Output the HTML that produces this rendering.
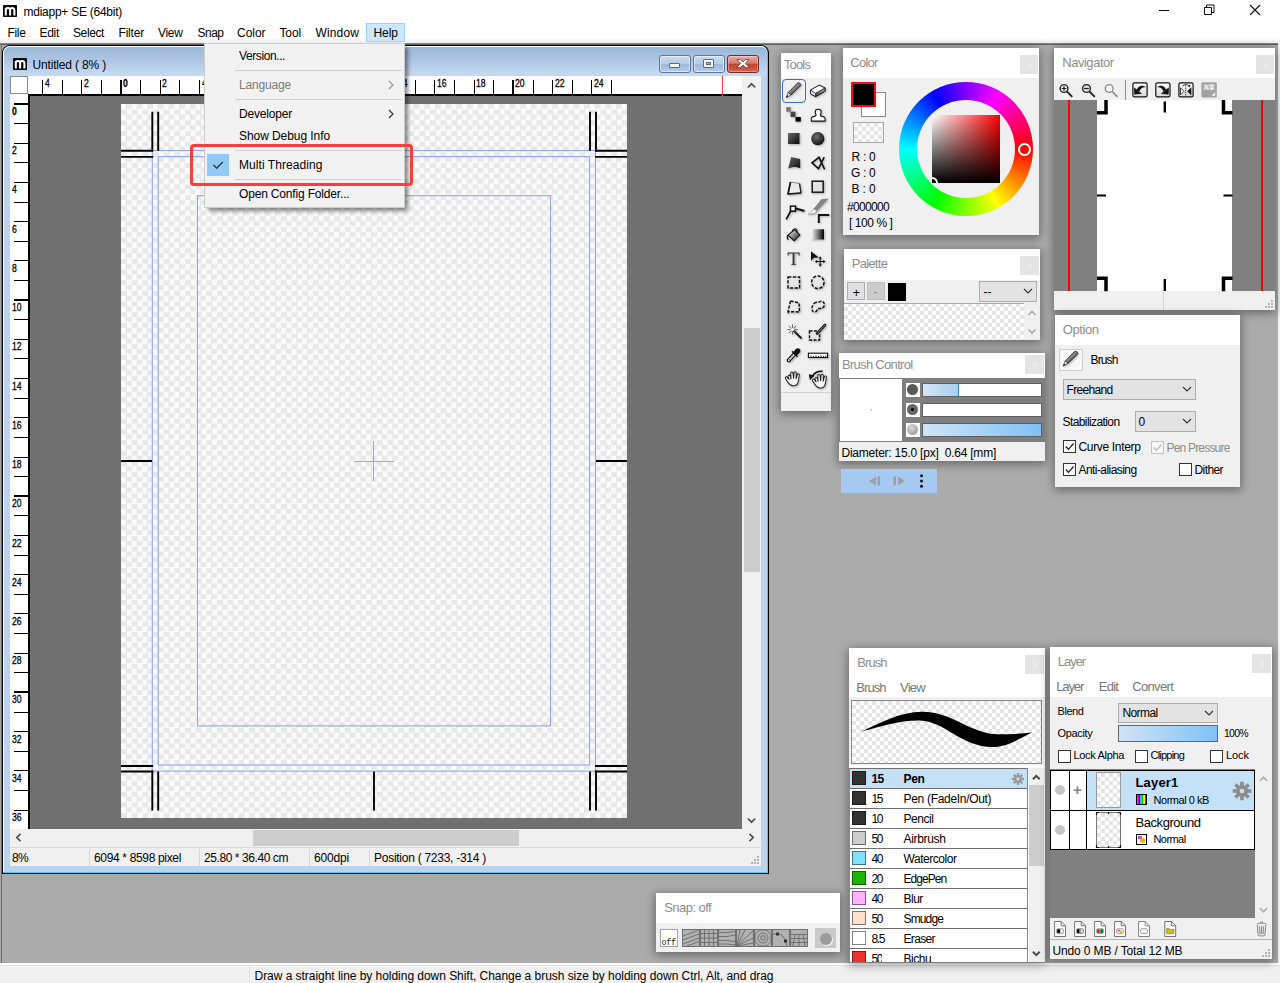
<!DOCTYPE html>
<html lang="en">
<head>
<meta charset="utf-8">
<title>mdiapp+ SE (64bit)</title>
<style>
*{box-sizing:border-box;margin:0;padding:0}
html,body{width:1280px;height:983px;overflow:hidden;background:#ababab;font-family:"Liberation Sans","DejaVu Sans",sans-serif;font-size:12px;color:#000}
.a{position:absolute}
.t{position:absolute;white-space:nowrap;line-height:14px;font-size:12px}
svg{display:block;overflow:visible}
.chk{background:repeating-conic-gradient(#e8e8e8 0% 25%,#fafafa 0% 50%) 0 0/10.660px 10.660px}
.chk8{background:repeating-conic-gradient(#e4e4e4 0% 25%,#fcfcfc 0% 50%) 0 0/8px 8px}
.panel{position:absolute;background:#f0f0f0;box-shadow:0 2px 9px 1px rgba(0,0,0,.4)}
.ptitle{position:absolute;left:0;top:0;right:0;background:#fff}
.pt{position:absolute;white-space:nowrap;line-height:15px;font-size:13px;color:#8e8e8e;margin-top:-1px;margin-left:-.8px}
.pbtn{position:absolute;background:#e4e4e4;width:18px;height:18px}
.combo{position:absolute;background:#e3e3e3;border:1px solid #adadad}
.cb{position:absolute;width:13px;height:13px;background:#fff;border:1px solid #333}
.gt{font-family:"Liberation Sans","IPAGothic",sans-serif}
</style>
</head>
<body>
<!-- ===== application title bar + menu bar ===== -->
<div class="a" style="left:0;top:0;width:1280px;height:43px;background:linear-gradient(#fff 0,#fff 88%,#ececec 100%)"></div>
<div class="a" style="left:0;top:43px;width:1280px;height:2px;background:linear-gradient(#9c9c9c,#484848)"></div>
<svg class="a" style="left:3px;top:5px" width="14" height="12" viewBox="0 0 14 12"><rect width="14" height="12" rx=".8" fill="#0a0a0a"/><path d="M2.800 10.400V2.900M2.800 5.200C2.800 2.300 7.100 2.300 7.100 5.200V10.400M7.100 5.200C7.100 2.300 11.400 2.300 11.400 5.200V10.400" fill="none" stroke="#fff" stroke-width="2"/></svg>
<div class="t" style="letter-spacing:-0.253px;left:23.5px;top:5px;font-size:12px">mdiapp+ SE (64bit)</div>
<!-- window controls -->
<svg class="a" style="left:1158px;top:0px" width="110" height="20" viewBox="1158 0 110 20" fill="none" stroke="#111" stroke-width="1"><path d="M1159 10.500h10"/><path d="M1204.500 7.500h7v7h-7z"/><path d="M1206.500 7.500v-2.500h7.500v7.500h-2.500"/><path d="M1250 5l10 10M1260 5l-10 10" stroke-width="1.100"/></svg>
<div class="a" style="left:1278px;top:43px;width:2px;height:921px;background:#f4f4f4"></div>
<!-- menu -->
<div class="a" style="left:366px;top:23px;width:39px;height:19px;background:#cce8ff;border:1px solid #99d1ff"></div>
<div class="t" style="letter-spacing:-0.336px;left:7.500px;top:25.500px">File</div>
<div class="t" style="letter-spacing:-0.297px;left:39.500px;top:25.500px">Edit</div>
<div class="t" style="letter-spacing:-0.393px;left:73px;top:25.500px">Select</div>
<div class="t" style="letter-spacing:-0.195px;left:118.500px;top:25.500px">Filter</div>
<div class="t" style="letter-spacing:-0.324px;left:158px;top:25.500px">View</div>
<div class="t" style="letter-spacing:-0.508px;left:197.500px;top:25.500px">Snap</div>
<div class="t" style="letter-spacing:-0.037px;left:237px;top:25.500px">Color</div>
<div class="t" style="letter-spacing:-0.129px;left:279.500px;top:25.500px">Tool</div>
<div class="t" style="letter-spacing:0.135px;left:315.500px;top:25.500px">Window</div>
<div class="t" style="letter-spacing:-0.047px;left:373.500px;top:25.500px">Help</div>
<!-- bottom status bar -->
<div class="a" style="left:0;top:963px;width:1280px;height:20px;background:#f0f0f0;border-top:2px solid #fff"></div>
<div class="a" style="left:0;top:965px;width:1280px;height:1px;background:#e3e3e3"></div>
<div class="a" style="left:249px;top:966px;width:1px;height:17px;background:#dedede"></div>
<div class="t" style="letter-spacing:-0.040px;left:254.500px;top:968.500px">Draw a straight line by holding down Shift, Change a brush size by holding down Ctrl, Alt, and drag</div>
<!-- ===== MDI child window ===== -->
<div class="a" style="left:0;top:45px;width:1px;height:918px;background:#a6a6a6"></div><div class="a" style="left:1px;top:45px;width:1px;height:918px;background:#6e6e6e"></div>
<div class="a" style="left:2px;top:45px;width:767px;height:829px;background:#000;border-radius:8px 8px 0 0"></div>
<div class="a" style="left:3px;top:46px;width:765px;height:827px;background:#3fd0f4;border-radius:7px 7px 0 0"></div>
<div class="a" style="left:3px;top:46px;width:764px;height:826px;background:#fff;border-radius:7px 6px 0 0"></div>
<div class="a" style="left:4px;top:47px;width:763px;height:825px;background:#bbd3ec;border-radius:6px 6px 0 0"></div>
<div class="a" style="left:4px;top:47px;width:763px;height:29px;background:linear-gradient(#9bb6d6 0%,#a9c2e0 35%,#bad0ea 70%,#c6daf1 100%);border-radius:6px 6px 0 0"></div>
<!-- child title -->
<svg class="a" style="left:13px;top:58px" width="14" height="12" viewBox="0 0 14 12"><rect width="14" height="12" rx=".8" fill="#0a0a0a"/><path d="M2.800 10.400V2.900M2.800 5.200C2.800 2.300 7.100 2.300 7.100 5.200V10.400M7.100 5.200C7.100 2.300 11.400 2.300 11.400 5.200V10.400" fill="none" stroke="#fff" stroke-width="2"/></svg>
<div class="t" style="letter-spacing:-0.169px;left:32.500px;top:57.500px">Untitled ( 8% )</div>
<!-- caption buttons -->
<div class="a" style="left:659px;top:55px;width:32px;height:18px;border:1px solid #5f7590;border-radius:3px;background:linear-gradient(#c9dbef 0%,#b6cde7 48%,#9dbadb 52%,#b3cce8 100%);box-shadow:inset 0 0 0 1px rgba(255,255,255,.55)"></div>
<div class="a" style="left:669px;top:63px;width:11px;height:5px;background:#f4f4f4;border:1px solid #5a6a7c;border-radius:1px"></div>
<div class="a" style="left:693px;top:55px;width:32px;height:18px;border:1px solid #5f7590;border-radius:3px;background:linear-gradient(#c9dbef 0%,#b6cde7 48%,#9dbadb 52%,#b3cce8 100%);box-shadow:inset 0 0 0 1px rgba(255,255,255,.55)"></div>
<div class="a" style="left:703px;top:59px;width:11px;height:9px;background:#f4f4f4;border:1px solid #5a6a7c;border-radius:1px"></div>
<div class="a" style="left:706px;top:62px;width:5px;height:3px;background:#9fb8d6;border:1px solid #5a6a7c"></div>
<div class="a" style="left:727px;top:55px;width:32px;height:18px;border:1px solid #6b2a22;border-radius:3px;background:linear-gradient(#e9aea2 0%,#d9796a 45%,#c4412b 52%,#cf6450 100%);box-shadow:inset 0 0 0 1px rgba(255,255,255,.35)"></div>
<svg class="a" style="left:736px;top:59px" width="14" height="9" viewBox="0 0 14 9"><path d="M1 .6h3.600L7 2.700 9.400.6H13L9.300 4.400 13.300 8.400H9.600L7 6.100 4.400 8.400H.7l4-4z" fill="#fff" stroke="#5e3a3a" stroke-width=".8" stroke-linejoin="round"/></svg>
<!-- client area -->
<div class="a" style="left:10px;top:76px;width:751px;height:790px;background:#f0f0f0"></div>
<div class="a" style="left:10px;top:76px;width:732px;height:20px;background:#fff"></div>
<div class="a" style="left:30px;top:96px;width:712px;height:733px;background:#707070"></div>
<svg class="a" style="left:30px;top:76px" width="712" height="20" viewBox="30 76 712 20" font-family="Liberation Sans, sans-serif" font-size="11">
<rect x="30" y="76" width="712" height="20" fill="#fff"/>
<line x1="42.5" y1="80" x2="42.5" y2="94" stroke="#000" stroke-width="1"/>
<text x="45" y="86.500" stroke="#000" stroke-width=".3" textLength="4.8" lengthAdjust="spacingAndGlyphs">4</text>
<line x1="62.5" y1="80" x2="62.5" y2="94" stroke="#000" stroke-width="1"/>
<line x1="81.5" y1="80" x2="81.5" y2="94" stroke="#000" stroke-width="1"/>
<text x="84" y="86.500" stroke="#000" stroke-width=".3" textLength="4.8" lengthAdjust="spacingAndGlyphs">2</text>
<line x1="101.5" y1="80" x2="101.5" y2="94" stroke="#000" stroke-width="1"/>
<line x1="121" y1="80" x2="121" y2="94" stroke="#000" stroke-width="2"/>
<text x="123" y="86.500" font-weight="bold" stroke="#000" stroke-width=".3" textLength="4.8" lengthAdjust="spacingAndGlyphs">0</text>
<line x1="140.5" y1="80" x2="140.5" y2="94" stroke="#000" stroke-width="1"/>
<line x1="160.5" y1="80" x2="160.5" y2="94" stroke="#000" stroke-width="1"/>
<text x="162" y="86.500" stroke="#000" stroke-width=".3" textLength="4.8" lengthAdjust="spacingAndGlyphs">2</text>
<line x1="179.5" y1="80" x2="179.5" y2="94" stroke="#000" stroke-width="1"/>
<line x1="199.5" y1="80" x2="199.5" y2="94" stroke="#000" stroke-width="1"/>
<text x="202" y="86.500" stroke="#000" stroke-width=".3" textLength="4.8" lengthAdjust="spacingAndGlyphs">4</text>
<line x1="219.5" y1="80" x2="219.5" y2="94" stroke="#000" stroke-width="1"/>
<line x1="238.5" y1="80" x2="238.5" y2="94" stroke="#000" stroke-width="1"/>
<text x="241" y="86.500" stroke="#000" stroke-width=".3" textLength="4.8" lengthAdjust="spacingAndGlyphs">6</text>
<line x1="258.5" y1="80" x2="258.5" y2="94" stroke="#000" stroke-width="1"/>
<line x1="278.5" y1="80" x2="278.5" y2="94" stroke="#000" stroke-width="1"/>
<text x="280" y="86.500" stroke="#000" stroke-width=".3" textLength="4.8" lengthAdjust="spacingAndGlyphs">8</text>
<line x1="297.5" y1="80" x2="297.5" y2="94" stroke="#000" stroke-width="1"/>
<line x1="317" y1="80" x2="317" y2="94" stroke="#000" stroke-width="2"/>
<text x="319" y="86.500" stroke="#000" stroke-width=".3" textLength="9.6" lengthAdjust="spacingAndGlyphs">10</text>
<line x1="336.5" y1="80" x2="336.5" y2="94" stroke="#000" stroke-width="1"/>
<line x1="356.5" y1="80" x2="356.5" y2="94" stroke="#000" stroke-width="1"/>
<text x="358" y="86.500" stroke="#000" stroke-width=".3" textLength="9.6" lengthAdjust="spacingAndGlyphs">12</text>
<line x1="376.5" y1="80" x2="376.5" y2="94" stroke="#000" stroke-width="1"/>
<line x1="395.5" y1="80" x2="395.5" y2="94" stroke="#000" stroke-width="1"/>
<text x="398" y="86.500" stroke="#000" stroke-width=".3" textLength="9.6" lengthAdjust="spacingAndGlyphs">14</text>
<line x1="415.5" y1="80" x2="415.5" y2="94" stroke="#000" stroke-width="1"/>
<line x1="434.5" y1="80" x2="434.5" y2="94" stroke="#000" stroke-width="1"/>
<text x="437" y="86.500" stroke="#000" stroke-width=".3" textLength="9.6" lengthAdjust="spacingAndGlyphs">16</text>
<line x1="454.5" y1="80" x2="454.5" y2="94" stroke="#000" stroke-width="1"/>
<line x1="474.5" y1="80" x2="474.5" y2="94" stroke="#000" stroke-width="1"/>
<text x="476" y="86.500" stroke="#000" stroke-width=".3" textLength="9.6" lengthAdjust="spacingAndGlyphs">18</text>
<line x1="493.5" y1="80" x2="493.5" y2="94" stroke="#000" stroke-width="1"/>
<line x1="513" y1="80" x2="513" y2="94" stroke="#000" stroke-width="2"/>
<text x="515" y="86.500" stroke="#000" stroke-width=".3" textLength="9.6" lengthAdjust="spacingAndGlyphs">20</text>
<line x1="533.5" y1="80" x2="533.5" y2="94" stroke="#000" stroke-width="1"/>
<line x1="552.5" y1="80" x2="552.5" y2="94" stroke="#000" stroke-width="1"/>
<text x="555" y="86.500" stroke="#000" stroke-width=".3" textLength="9.6" lengthAdjust="spacingAndGlyphs">22</text>
<line x1="572.5" y1="80" x2="572.5" y2="94" stroke="#000" stroke-width="1"/>
<line x1="591.5" y1="80" x2="591.5" y2="94" stroke="#000" stroke-width="1"/>
<text x="594" y="86.500" stroke="#000" stroke-width=".3" textLength="9.6" lengthAdjust="spacingAndGlyphs">24</text>
<line x1="611.5" y1="80" x2="611.5" y2="94" stroke="#000" stroke-width="1"/>
<rect x="30" y="94" width="712" height="2" fill="#000"/>
<line x1="722.5" y1="76" x2="722.5" y2="96" stroke="#f04040" stroke-width="1"/>
</svg>
<svg class="a" style="left:10px;top:96px" width="20" height="733" viewBox="10 96 20 733" font-family="Liberation Sans, sans-serif" font-size="11">
<rect x="10" y="96" width="20" height="733" fill="#fff"/>
<line x1="14" y1="104" x2="28" y2="104" stroke="#000" stroke-width="2"/>
<text x="12" y="114.5" font-weight="bold" stroke="#000" stroke-width=".3" textLength="4.8" lengthAdjust="spacingAndGlyphs">0</text>
<line x1="14" y1="123.5" x2="28" y2="123.5" stroke="#000" stroke-width="1"/>
<line x1="14" y1="143.5" x2="28" y2="143.5" stroke="#000" stroke-width="1"/>
<text x="12" y="153.5" stroke="#000" stroke-width=".3" textLength="4.8" lengthAdjust="spacingAndGlyphs">2</text>
<line x1="14" y1="162.5" x2="28" y2="162.5" stroke="#000" stroke-width="1"/>
<line x1="14" y1="182.5" x2="28" y2="182.5" stroke="#000" stroke-width="1"/>
<text x="12" y="192.5" stroke="#000" stroke-width=".3" textLength="4.8" lengthAdjust="spacingAndGlyphs">4</text>
<line x1="14" y1="202.5" x2="28" y2="202.5" stroke="#000" stroke-width="1"/>
<line x1="14" y1="221.5" x2="28" y2="221.5" stroke="#000" stroke-width="1"/>
<text x="12" y="232.5" stroke="#000" stroke-width=".3" textLength="4.8" lengthAdjust="spacingAndGlyphs">6</text>
<line x1="14" y1="241.5" x2="28" y2="241.5" stroke="#000" stroke-width="1"/>
<line x1="14" y1="260.5" x2="28" y2="260.5" stroke="#000" stroke-width="1"/>
<text x="12" y="271.5" stroke="#000" stroke-width=".3" textLength="4.8" lengthAdjust="spacingAndGlyphs">8</text>
<line x1="14" y1="280.5" x2="28" y2="280.5" stroke="#000" stroke-width="1"/>
<line x1="14" y1="300" x2="28" y2="300" stroke="#000" stroke-width="2"/>
<text x="12" y="310.5" stroke="#000" stroke-width=".3" textLength="9.6" lengthAdjust="spacingAndGlyphs">10</text>
<line x1="14" y1="319.5" x2="28" y2="319.5" stroke="#000" stroke-width="1"/>
<line x1="14" y1="339.5" x2="28" y2="339.5" stroke="#000" stroke-width="1"/>
<text x="12" y="349.5" stroke="#000" stroke-width=".3" textLength="9.6" lengthAdjust="spacingAndGlyphs">12</text>
<line x1="14" y1="358.5" x2="28" y2="358.5" stroke="#000" stroke-width="1"/>
<line x1="14" y1="378.5" x2="28" y2="378.5" stroke="#000" stroke-width="1"/>
<text x="12" y="389.5" stroke="#000" stroke-width=".3" textLength="9.6" lengthAdjust="spacingAndGlyphs">14</text>
<line x1="14" y1="398.5" x2="28" y2="398.5" stroke="#000" stroke-width="1"/>
<line x1="14" y1="417.5" x2="28" y2="417.5" stroke="#000" stroke-width="1"/>
<text x="12" y="428.5" stroke="#000" stroke-width=".3" textLength="9.6" lengthAdjust="spacingAndGlyphs">16</text>
<line x1="14" y1="437.5" x2="28" y2="437.5" stroke="#000" stroke-width="1"/>
<line x1="14" y1="457.5" x2="28" y2="457.5" stroke="#000" stroke-width="1"/>
<text x="12" y="467.5" stroke="#000" stroke-width=".3" textLength="9.6" lengthAdjust="spacingAndGlyphs">18</text>
<line x1="14" y1="476.5" x2="28" y2="476.5" stroke="#000" stroke-width="1"/>
<line x1="14" y1="496" x2="28" y2="496" stroke="#000" stroke-width="2"/>
<text x="12" y="506.5" stroke="#000" stroke-width=".3" textLength="9.6" lengthAdjust="spacingAndGlyphs">20</text>
<line x1="14" y1="515.5" x2="28" y2="515.5" stroke="#000" stroke-width="1"/>
<line x1="14" y1="535.5" x2="28" y2="535.5" stroke="#000" stroke-width="1"/>
<text x="12" y="546.5" stroke="#000" stroke-width=".3" textLength="9.6" lengthAdjust="spacingAndGlyphs">22</text>
<line x1="14" y1="555.5" x2="28" y2="555.5" stroke="#000" stroke-width="1"/>
<line x1="14" y1="574.5" x2="28" y2="574.5" stroke="#000" stroke-width="1"/>
<text x="12" y="585.5" stroke="#000" stroke-width=".3" textLength="9.6" lengthAdjust="spacingAndGlyphs">24</text>
<line x1="14" y1="594.5" x2="28" y2="594.5" stroke="#000" stroke-width="1"/>
<line x1="14" y1="613.5" x2="28" y2="613.5" stroke="#000" stroke-width="1"/>
<text x="12" y="624.5" stroke="#000" stroke-width=".3" textLength="9.6" lengthAdjust="spacingAndGlyphs">26</text>
<line x1="14" y1="633.5" x2="28" y2="633.5" stroke="#000" stroke-width="1"/>
<line x1="14" y1="653.5" x2="28" y2="653.5" stroke="#000" stroke-width="1"/>
<text x="12" y="663.5" stroke="#000" stroke-width=".3" textLength="9.6" lengthAdjust="spacingAndGlyphs">28</text>
<line x1="14" y1="672.5" x2="28" y2="672.5" stroke="#000" stroke-width="1"/>
<line x1="14" y1="692" x2="28" y2="692" stroke="#000" stroke-width="2"/>
<text x="12" y="702.5" stroke="#000" stroke-width=".3" textLength="9.6" lengthAdjust="spacingAndGlyphs">30</text>
<line x1="14" y1="712.5" x2="28" y2="712.5" stroke="#000" stroke-width="1"/>
<line x1="14" y1="731.5" x2="28" y2="731.5" stroke="#000" stroke-width="1"/>
<text x="12" y="742.5" stroke="#000" stroke-width=".3" textLength="9.6" lengthAdjust="spacingAndGlyphs">32</text>
<line x1="14" y1="751.5" x2="28" y2="751.5" stroke="#000" stroke-width="1"/>
<line x1="14" y1="770.5" x2="28" y2="770.5" stroke="#000" stroke-width="1"/>
<text x="12" y="781.5" stroke="#000" stroke-width=".3" textLength="9.6" lengthAdjust="spacingAndGlyphs">34</text>
<line x1="14" y1="790.5" x2="28" y2="790.5" stroke="#000" stroke-width="1"/>
<line x1="14" y1="810.5" x2="28" y2="810.5" stroke="#000" stroke-width="1"/>
<text x="12" y="820.5" stroke="#000" stroke-width=".3" textLength="9.6" lengthAdjust="spacingAndGlyphs">36</text>
<rect x="28" y="94" width="2" height="735" fill="#000"/>
</svg>
<div class="a" style="left:10px;top:76px;width:18px;height:18px;background:#fff;border:1px solid #8a8a8a"></div>
<!-- paper -->
<div class="a chk" style="left:121px;top:104px;width:506px;height:714px"></div>
<svg class="a" style="left:121px;top:104px" width="506" height="714" viewBox="121 104 506 714" fill="none">
<g stroke="#8fa7f2" stroke-width="1.100">
<rect x="152.300" y="150.500" width="443.200" height="620.600"/>
<rect x="158.200" y="156.600" width="431.400" height="608.400"/>
<rect x="197.500" y="195.700" width="353" height="530.200"/>
<path d="M354 461.500h40M373.500 441v40" stroke="#8fa9f5"/>
</g>
<g stroke="#000" stroke-width="1.900">
<path d="M152.300 111.700v40M158.200 111.700v39"/><path d="M121 150.800h32.200M121 156.900h32.200"/>
<path d="M590 111.700v39M596 111.700v40"/><path d="M595.100 150.800h32M595.100 156.900h32"/>
<path d="M152.300 770.600v40M158.200 771.500v39"/><path d="M121 766h32.200M121 771.500h32.200"/>
<path d="M590 771.500v39M596 770.600v40"/><path d="M595.100 766h32M595.100 771.500h32"/>
<path d="M374 771.500v39"/><path d="M121 461h31M596 461h31"/>
</g>
</svg>
<!-- scrollbars -->
<div class="a" style="left:742px;top:76px;width:19px;height:753px;background:#f0f0f0"></div>
<div class="a" style="left:743.500px;top:328px;width:16px;height:244px;background:#cdcdcd"></div>
<div class="a" style="left:10px;top:829px;width:751px;height:18px;background:#f0f0f0"></div>
<div class="a" style="left:252.500px;top:830px;width:266px;height:16px;background:#cdcdcd"></div>
<svg class="a" style="left:742px;top:76px" width="19" height="771" viewBox="742 76 19 771" fill="none" stroke="#505050" stroke-width="1.700"><path d="M747.800 87.500l3.700-3.700 3.700 3.700"/><path d="M747.800 818.500l3.700 3.700 3.700-3.700"/><path d="M749.500 833.800l3.700 3.700-3.700 3.700"/></svg>
<svg class="a" style="left:10px;top:829px" width="20" height="18" viewBox="10 829 20 18" fill="none" stroke="#505050" stroke-width="1.700"><path d="M20.500 833.800l-3.700 3.700 3.700 3.700"/></svg>
<!-- child status bar -->
<div class="a" style="left:10px;top:847px;width:751px;height:1px;background:#d9d9d9"></div>
<div class="a" style="left:89px;top:849px;width:1px;height:17px;background:#d7d7d7"></div>
<div class="a" style="left:199px;top:849px;width:1px;height:17px;background:#d7d7d7"></div>
<div class="a" style="left:309px;top:849px;width:1px;height:17px;background:#d7d7d7"></div>
<div class="a" style="left:369px;top:849px;width:1px;height:17px;background:#d7d7d7"></div>
<div class="t" style="letter-spacing:-0.672px;left:12px;top:851px">8%</div>
<div class="t" style="letter-spacing:-0.338px;left:94px;top:851px">6094 * 8598 pixel</div>
<div class="t" style="letter-spacing:-0.421px;left:204px;top:851px">25.80 * 36.40 cm</div>
<div class="t" style="letter-spacing:-0.174px;left:314px;top:851px">600dpi</div>
<div class="t" style="letter-spacing:-0.264px;left:374px;top:851px">Position ( 7233, -314 )</div>
<svg class="a" style="left:751px;top:856px" width="9" height="9" viewBox="0 0 9 9" fill="#b4b4b4"><rect x="6" y="0" width="2" height="2"/><rect x="3" y="3" width="2" height="2"/><rect x="6" y="3" width="2" height="2"/><rect x="0" y="6" width="2" height="2"/><rect x="3" y="6" width="2" height="2"/><rect x="6" y="6" width="2" height="2"/></svg>
<!-- ===== Tools panel ===== -->
<div class="panel" style="left:781px;top:53px;width:50px;height:358px"></div>
<div class="a" style="left:781px;top:53px;width:50px;height:25px;background:#fff"></div>
<div class="pt" style="letter-spacing:-0.772px;left:784.500px;top:58px">Tools</div>
<div class="a" style="left:781px;top:392px;width:50px;height:1px;background:#d2d2d2"></div>
<div class="a" style="left:782px;top:79px;width:24px;height:24px;border:1px solid #2f6bd6;border-radius:4px;background:#f1f1f1"></div>
<svg class="a" style="left:782px;top:79px;filter:drop-shadow(1px 1px 1px rgba(0,0,0,.28))" width="48" height="312" viewBox="0 0 48 312">
<defs>
<linearGradient id="gdk" x1="0" y1="0" x2="1" y2="1"><stop offset="0" stop-color="#6a6a6a"/><stop offset="1" stop-color="#0a0a0a"/></linearGradient>
<radialGradient id="gball" cx=".4" cy=".35" r=".7"><stop offset="0" stop-color="#6e6e6e"/><stop offset="1" stop-color="#0d0d0d"/></radialGradient>
<linearGradient id="gwb" x1="0" y1="0" x2="1" y2="0"><stop offset="0" stop-color="#fff"/><stop offset="1" stop-color="#000"/></linearGradient>
<linearGradient id="gbk" x1="0" y1="0" x2="1" y2="1"><stop offset="0" stop-color="#fff"/><stop offset=".5" stop-color="#888"/><stop offset="1" stop-color="#111"/></linearGradient>
</defs>
<!-- row0: pencil, eraser -->
<g><defs><linearGradient id="gpn" x1="0" y1="0" x2="1" y2="1"><stop offset="0" stop-color="#1a1a1a"/><stop offset=".45" stop-color="#8f8f8f"/><stop offset=".62" stop-color="#555"/><stop offset="1" stop-color="#050505"/></linearGradient></defs><path d="M6.200 13.600L15.600 4c1.500-.7 3.500.9 3.100 2.600L9 15.900z" fill="url(#gpn)" stroke="#0a0a0a" stroke-width=".7" stroke-linejoin="round"/><path d="M6.200 13.600l2.800 2.300-4.900 2.700z" fill="#f2f2f2" stroke="#111" stroke-width=".6" stroke-linejoin="round"/><path d="M4.100 18.600l1.200-2.300 1.100 1z" fill="#000"/></g>
<g transform="translate(24 0)"><defs><linearGradient id="ger" x1="0" y1="0" x2="1" y2="0"><stop offset="0" stop-color="#4a4a4a"/><stop offset="1" stop-color="#a8a8a8"/></linearGradient></defs><path d="M4.500 11l8.700-4.900 5.800 2.800v3.300l-9.400 5.400-5.100-2.800z" fill="#fff" stroke="#111" stroke-width="1" stroke-linejoin="round"/><path d="M9.600 14.300L19 8.900v3.300l-9.400 5.400z" fill="url(#ger)" stroke="#111" stroke-width=".8" stroke-linejoin="round"/><path d="M4.500 11l5.100 3.300v3.300l-5.100-2.800z" fill="#e4e4e4" stroke="#111" stroke-width=".8" stroke-linejoin="round"/></g>
<!-- row1: dots, stamp -->
<g transform="translate(0 24)"><rect x="4.200" y="4.100" width="4.500" height="4.600" fill="#7a7a7a"/><rect x="8.600" y="8.700" width="4.900" height="5.300" fill="#454545"/><rect x="13.500" y="14" width="5.300" height="4.600" fill="#000"/></g>
<g transform="translate(24 24)"><path d="M12.200 6.300c1.900 0 3 1.300 3 2.800 0 1.400-.9 2.200-.9 3.100 0 1 3.800 1.300 4.500 2.500.4.700.3 2.300.3 3.400H5.300c0-1.100-.1-2.700.3-3.400.7-1.200 4.500-1.500 4.500-2.500 0-.9-.9-1.700-.9-3.100 0-1.500 1.100-2.800 3-2.800z" fill="#fff" stroke="#111" stroke-width="1.100" stroke-linejoin="round"/></g>
<!-- row2: square, circle -->
<g transform="translate(0 48)"><rect x="6" y="6" width="11.500" height="11" fill="url(#gdk)"/></g>
<g transform="translate(24 48)"><circle cx="11.800" cy="11.700" r="6.600" fill="url(#gball)"/></g>
<!-- row3: filled polygon, polyline -->
<g transform="translate(.8 73.500)"><path d="M8.300 4.500l9 2 .1 9.300c-3.800-1.800-8.600-1.600-12 .4z" fill="url(#gdk)"/></g>
<g transform="translate(25 73.700)"><path d="M17.200 4.500L11.500 16 5 10.200l7-5.600 5.600 12" fill="none" stroke="#111" stroke-width="1.600" stroke-linejoin="miter"/></g>
<!-- row4: outline polygon, outline rect -->
<g transform="translate(1 97.500)"><path d="M7.500 5.500l9 1.500 1.500 9.500L5 17.500z" fill="#ececec" stroke="#8a8a8a" stroke-width="1" stroke-linejoin="round"/><path d="M18 16.500L5 17.500l2.500-12" fill="none" stroke="#111" stroke-width="1.700" stroke-linejoin="round"/><path d="M16.500 7l1.500 9.500" stroke="#222" stroke-width="1.300"/></g>
<g transform="translate(24 96)"><rect x="6.200" y="6.200" width="11" height="11" fill="#e2e2e2" stroke="#1a1a1a" stroke-width="1.500"/></g>
<!-- row5: pen-curve, knife -->
<g transform="translate(1 119.500)"><path d="M3.200 20.800L8.800 10.500" fill="none" stroke="#111" stroke-width="1.700"/><path d="M12 9.800l9.500 2.600" fill="none" stroke="#111" stroke-width="2.100"/><rect x="7.500" y="7.700" width="5" height="5" fill="#fff" stroke="#111" stroke-width="1.500"/></g>
<g transform="translate(24 120)"><path d="M21.800 0l-6.300.5-7.700 9.500 3 1.800z" fill="#858585" stroke="#6a6a6a" stroke-width=".5"/><path d="M7.800 10L2.200 15.300l6.600-.9 2-2.600z" fill="#f8f8f8" stroke="#8a8a8a" stroke-width=".7"/><path d="M12.800 24v-8h10.500" fill="none" stroke="#111" stroke-width="1.900"/></g>
<!-- row6: bucket, gradient -->
<g transform="translate(2.200 145.500) scale(.86)"><path d="M4.500 12.500l7.300-6.500 6.500 6-6.700 7z" fill="url(#gbk)" stroke="#111" stroke-width="1.200" stroke-linejoin="round"/><path d="M9.500 8.500c-.4-3 3.500-4.500 5-2.500l.8 3.500" fill="none" stroke="#111" stroke-width="1.200"/><path d="M4.500 12.500c-1.200 1.200-1 3.500.2 5.300" fill="none" stroke="#111" stroke-width="1.400"/></g>
<g transform="translate(24 144)"><rect x="5" y="6.300" width="13" height="10.200" fill="url(#gwb)"/></g>
<!-- row7: text, move -->
<g transform="translate(0 168)"><path d="M5.600 5.500h12v3.200h-.6c-.3-1.800-.9-2.300-2.400-2.300h-2.100v9.800c0 1 .4 1.300 1.700 1.300v.6H8.900v-.6c1.300 0 1.700-.3 1.700-1.300V6.400H8.600c-1.500 0-2.100.5-2.400 2.300h-.6z" fill="#3a3a3a"/></g>
<g transform="translate(24 168)"><path d="M5 4.300v9.700l2.800-3.200 5-.2z" fill="#111"/><path d="M14.200 10.500v8M10.200 14.500h8" stroke="#111" stroke-width="1.100"/><path d="M14.200 9.200l-1.700 2.200h3.400zM14.200 19.800l-1.700-2.200h3.400zM8.900 14.500l2.200-1.700v3.400zM19.500 14.500l-2.200-1.700v3.400z" fill="#111"/></g>
<!-- row8: rect select, ellipse select -->
<g transform="translate(0 191.500)"><rect x="6" y="6.500" width="11.500" height="11" fill="#e6e6e6" stroke="#111" stroke-width="1.500" stroke-dasharray="3.400 1.400"/></g>
<g transform="translate(-.2 191.300)" ><circle cx="36" cy="12" r="6.200" fill="#e6e6e6" stroke="#111" stroke-width="1.500" stroke-dasharray="3.200 1.500"/></g>
<!-- row9: polygon select, lasso -->
<g transform="translate(0 216)"><path d="M8.500 6l8.500 2 .5 9-11.500-.5z" fill="#e6e6e6" stroke="#111" stroke-width="1.500" stroke-dasharray="3.200 1.400" stroke-linejoin="round"/><path d="M4.800 18l2.500-1.500-.6 2z" fill="#111"/></g>
<g transform="translate(24 216)"><path d="M8.300 8.300c2-1.800 3.200-.3 5-1.500 2.500-1.700 5.300.3 5 3.300-.2 2.600-2.600 3.400-5.500 3.400-2 0-1.600 3.500-4.300 3.500C5 17 5.200 11 8.300 8.300z" fill="#e6e6e6" stroke="#111" stroke-width="1.500" stroke-dasharray="3 1.400"/></g>
<!-- row10: wand, select pen -->
<g transform="translate(0 240)"><path d="M10.500 10.500l9 9" stroke="#111" stroke-width="1.800"/><path d="M10.500 5.300v10.400M5.300 10.500h10.400M6.800 6.800l7.400 7.400M14.200 6.800l-7.400 7.400" stroke="#555" stroke-width=".8"/><circle cx="10.500" cy="10.500" r="1.600" fill="#fff"/></g>
<g transform="translate(23.500 241)"><rect x="4" y="11" width="10" height="9" fill="#e6e6e6" stroke="#111" stroke-width="1.500" stroke-dasharray="3 1.400"/><path d="M11.500 13.500l8-8.500" stroke="#111" stroke-width="2.600" stroke-linecap="round"/><path d="M12 13l7.500-8" stroke="#999" stroke-width=".9" stroke-linecap="round"/></g>
<!-- row11: eyedropper, ruler -->
<g transform="translate(0 264)"><path d="M5.800 18.500l-.6-1.700 6.500-7 2 2-6.500 7z" fill="#fff" stroke="#111" stroke-width="1.200"/><path d="M10 8.300l5.500 5.500M11.500 10l3-3.500c1.500-1.700 4.200.7 2.700 2.400l-3.200 3.300z" fill="#111" stroke="#111" stroke-width="1.500"/><path d="M6.800 16l1.200 1.200M8.500 14l1.200 1.200M10 12.300l1.200 1.200" stroke="#111" stroke-width=".7"/></g>
<g transform="translate(24 264)"><rect x="2.400" y="10.200" width="19.200" height="4.300" fill="#fff" stroke="#111" stroke-width="1.100"/><path d="M5 14.500v-2M7.500 14.500v-1.500M10 14.500v-2M12.500 14.500v-1.500M15 14.500v-2M17.500 14.500v-1.500M19.800 14.500v-2" stroke="#111" stroke-width=".9"/></g>
<!-- row12: hand, rotate hand -->
<g transform="translate(-1.200 286.800) scale(1.120)"><path d="M6.500 9.800c-.3-1.700 1.600-2 2-.5l.6 2.400-.3-5c0-1.500 1.900-1.500 2.100-.1l.5 4.600.4-4.900c.2-1.400 2-1.200 2 .2l-.1 5 1-3.700c.4-1.300 2.100-.8 1.800.6-.5 2.700-.6 4.700-1.200 6.600-.6 2-2.300 3-4.700 2.800-2-.2-3.500-1.800-4.600-3.600l-1.800-2.900c-.6-1.100.8-1.900 1.600-1l1.600 1.900z" fill="#f4f4f4" stroke="#222" stroke-width=".9" stroke-linejoin="round"/></g>
<g transform="translate(24 288)"><path transform="translate(-1.500 -2.200) scale(1.120)" d="M9.500 12.800c-.3-1.700 1.600-2 2-.5l.6 2.400-.3-5c0-1.500 1.900-1.500 2.100-.1l.5 4.600.4-4.900c.2-1.400 2-1.200 2 .2l-.1 5 1-3.700c.4-1.300 2.100-.8 1.800.6-.5 2.700-.6 4.700-1.200 6.600-.6 2-2.300 3-4.700 2.800-2-.2-3.500-1.800-4.600-3.600l-1.800-2.900c-.6-1.100.8-1.900 1.600-1l1.600 1.900z" fill="#f4f4f4" stroke="#222" stroke-width=".9" stroke-linejoin="round"/><path d="M16.500 4.300c-4.500-.4-8.200 1.600-10.400 5" fill="none" stroke="#111" stroke-width="1.500"/><path d="M2.800 7.300l5.600 1.300-4.500 4.700z" fill="#111"/></g>
</svg>
<!-- ===== Color panel ===== -->
<div class="panel" style="left:843px;top:48px;width:196px;height:187px"></div>
<div class="a" style="left:843px;top:48px;width:196px;height:30px;background:#fff"></div>
<div class="pt" style="letter-spacing:-0.716px;left:851px;top:56px">Color</div>
<div class="pbtn" style="left:1020px;top:55px;width:18px;height:19px"><svg class="a" style="left:6.500px;top:7px" width="6" height="6" viewBox="0 0 6 6" fill="none" stroke="#ececec" stroke-width="1.100"><path d="M.5.5l5 5M5.500.5l-5 5"/></svg></div>
<div class="a" style="left:861px;top:92px;width:25px;height:25px;background:#fff;border:1px solid #8c8c8c"></div>
<div class="a" style="left:851px;top:82px;width:25px;height:25px;background:#000;border:2px solid #f01010"></div>
<div class="a chk chk8" style="left:853px;top:122px;width:31px;height:21px;border:1px solid #a8a8a8"></div>
<div class="t gt" style="letter-spacing:-0.269px;left:851.500px;top:150px">R : 0</div>
<div class="t gt" style="letter-spacing:-0.303px;left:851px;top:166px">G : 0</div>
<div class="t gt" style="letter-spacing:-0.138px;left:851.500px;top:182px">B : 0</div>
<div class="t gt" style="letter-spacing:-0.674px;left:847px;top:200px">#000000</div>
<div class="t gt" style="letter-spacing:-0.431px;left:849px;top:215.500px">[ 100 % ]</div>
<div class="a" style="left:899px;top:82px;width:134px;height:134px;border-radius:50%;background:conic-gradient(from 90deg,#f00,#ff0,#0f0,#0ff,#00f,#f0f,#f00)"></div>
<div class="a" style="left:917px;top:100px;width:98px;height:98px;border-radius:50%;background:#f0f0f0"></div>
<div class="a" style="left:932px;top:115px;width:68px;height:68px;background:linear-gradient(to top,#000,rgba(0,0,0,0)),linear-gradient(to right,#fff,#f00);overflow:hidden"><div class="a" style="left:-6px;top:62px;width:12px;height:12px;border-radius:50%;border:2px solid #fff"></div></div>
<div class="a" style="left:1018px;top:142.500px;width:13px;height:13px;border-radius:50%;border:2px solid #fff;background:#f00"></div>
<!-- ===== Palette panel ===== -->
<div class="panel" style="left:844px;top:249px;width:196px;height:91px"></div>
<div class="a" style="left:844px;top:249px;width:196px;height:31px;background:#fff"></div>
<div class="pt" style="letter-spacing:-0.712px;left:852.500px;top:257px">Palette</div>
<div class="pbtn" style="left:1020px;top:256px;width:19px;height:19px"><svg class="a" style="left:6.500px;top:7px" width="6" height="6" viewBox="0 0 6 6" fill="none" stroke="#ececec" stroke-width="1.100"><path d="M.5.5l5 5M5.500.5l-5 5"/></svg></div>
<div class="a" style="left:847px;top:282px;width:18px;height:18px;background:#e1e1e1;border:1px solid #adadad"></div>
<div class="t" style="left:852.500px;top:285.500px;font-size:13px">+</div>
<div class="a" style="left:867px;top:282px;width:18px;height:18px;background:#cccccc;border:1px solid #bfbfbf"></div>
<div class="t" style="left:873.500px;top:284.500px;color:#8a8a8a">-</div>
<div class="a" style="left:888px;top:283px;width:18px;height:18px;background:#000"></div>
<div class="combo" style="left:979px;top:281px;width:58px;height:21px"></div>
<div class="t" style="left:983.500px;top:284.500px">--</div>
<svg class="a" style="left:1023px;top:288px" width="10" height="7" viewBox="0 0 10 7" fill="none" stroke="#333" stroke-width="1.200"><path d="M1 1l4 4 4-4"/></svg>
<div class="a chk chk8" style="left:844px;top:303px;width:180px;height:37px"></div>
<div class="a" style="left:844px;top:303px;width:196px;height:1px;background:#a8a8a8"></div>
<div class="a" style="left:1024px;top:303px;width:16px;height:37px;background:#f0f0f0"></div>
<svg class="a" style="left:1024px;top:303px" width="16" height="37" viewBox="0 0 16 37" fill="none" stroke="#adadad" stroke-width="1.600"><path d="M4.500 12l3.500-3.500 3.500 3.500"/><path d="M4.500 26.500l3.500 3.500 3.500-3.500"/></svg>
<!-- ===== Brush Control panel ===== -->
<div class="panel" style="left:839px;top:353px;width:206px;height:108px"></div>
<div class="a" style="left:839px;top:353px;width:206px;height:25px;background:#fff"></div>
<div class="pt" style="letter-spacing:-0.683px;left:842.700px;top:358px">Brush Control</div>
<div class="pbtn" style="left:1025px;top:355px;width:19px;height:19px"><svg class="a" style="left:6.500px;top:7px" width="6" height="6" viewBox="0 0 6 6" fill="none" stroke="#ececec" stroke-width="1.100"><path d="M.5.5l5 5M5.500.5l-5 5"/></svg></div>
<div class="a" style="left:839px;top:378px;width:206px;height:64px;background:#7f7f7f"></div>
<div class="a" style="left:840px;top:379px;width:62px;height:62px;background:#fff"></div>
<div class="a" style="left:870px;top:409px;width:2px;height:2px;background:#d4d4d4"></div>
<div class="a" style="left:905.500px;top:382.500px;width:14px;height:14px;background:#fff"></div>
<div class="a" style="left:907px;top:384px;width:11px;height:11px;border-radius:50%;background:#5a5a5a"></div>
<div class="a" style="left:905.500px;top:402.500px;width:14px;height:14px;background:#fff"></div>
<div class="a" style="left:907px;top:404px;width:11px;height:11px;border-radius:50%;background:radial-gradient(circle,#111 0,#111 14%,#6e6e6e 30%,#555 100%)"></div>
<div class="a" style="left:905.500px;top:422.500px;width:14px;height:14px;background:#fff"></div>
<div class="a" style="left:907px;top:424px;width:11px;height:11px;border-radius:50%;background:radial-gradient(circle at 40% 35%,#d8d8d8,#8c8c8c)"></div>
<div class="a" style="left:922px;top:382.500px;width:120px;height:14px;background:#fff;border:1px solid #5f5f5f"></div>
<div class="a" style="left:923px;top:383.500px;width:36px;height:12px;background:linear-gradient(to right,#d3e6f7,#a8cff1);border-right:1px solid #2f86e4"></div>
<div class="a" style="left:922px;top:402.500px;width:120px;height:14px;background:#fff;border:1px solid #5f5f5f"></div>
<div class="a" style="left:922px;top:422.500px;width:120px;height:14px;background:linear-gradient(to right,#d0e4f7,#7fc1f6);border:1px solid #5f5f5f"></div>
<div class="t" style="letter-spacing:-0.230px;left:841.500px;top:446px">Diameter: 15.0 [px]&nbsp; 0.64 [mm]</div>
<!-- blue mini bar -->
<div class="a" style="left:841px;top:469px;width:96px;height:24px;background:#a5c9f1"></div>
<svg class="a" style="left:841px;top:469px" width="96" height="24" viewBox="0 0 96 24"><g fill="#a0a0a0"><path d="M28 12l7-4.500v9z"/><rect x="36.500" y="7.500" width="2.500" height="9"/><path d="M64 12l-7-4.500v9z"/><rect x="52.500" y="7.500" width="2.500" height="9"/></g><g fill="#111"><circle cx="80.500" cy="6.800" r="1.500"/><circle cx="80.500" cy="12" r="1.500"/><circle cx="80.500" cy="17.200" r="1.500"/></g></svg>
<!-- ===== Navigator panel ===== -->
<div class="panel" style="left:1054px;top:48px;width:221px;height:262px"></div>
<div class="a" style="left:1054px;top:48px;width:221px;height:30px;background:#fff"></div>
<div class="pt" style="letter-spacing:-0.460px;left:1063px;top:56px">Navigator</div>
<div class="pbtn" style="left:1256px;top:55px;width:18px;height:19px"><svg class="a" style="left:6.500px;top:7px" width="6" height="6" viewBox="0 0 6 6" fill="none" stroke="#ececec" stroke-width="1.100"><path d="M.5.5l5 5M5.500.5l-5 5"/></svg></div>
<svg class="a" style="left:1054px;top:78px" width="221" height="22" viewBox="1054 78 221 22" fill="none">
<defs><linearGradient id="gnb" x1="0" y1="0" x2="0" y2="1"><stop offset="0" stop-color="#fff"/><stop offset="1" stop-color="#d8d8d8"/></linearGradient></defs>
<g stroke="#222"><path d="M1067 91.500l5.300 5.300" stroke-width="1.800"/><circle cx="1064" cy="88.500" r="3.900" fill="#e8e8e8" stroke-width="1.400"/><path d="M1061.700 88.500h4.600M1064 86.200v4.600" stroke-width="1.200"/></g>
<g stroke="#222"><path d="M1089.500 91.500l5.300 5.300" stroke-width="1.800"/><circle cx="1086.500" cy="88.500" r="3.900" fill="#e0e0e0" stroke-width="1.400"/><path d="M1084.200 88.500h4.600" stroke-width="1.200"/></g>
<g stroke="#8a8a8a"><path d="M1112.200 91.500l5.300 5.300" stroke-width="1.700"/><circle cx="1109.200" cy="88.500" r="3.900" fill="#f4f4f4" stroke-width="1.300"/></g>
<path d="M1125.500 80v20" stroke="#8c8c8c"/>
<g transform="translate(1132.300 82.300)"><rect x=".6" y=".6" width="14.200" height="14" rx="1.600" fill="url(#gnb)" stroke="#111" stroke-width="1.200"/><path d="M13.800 5.200C10.800 2 6 3 4.300 7.600l3 1.300C8.400 5.800 10.900 4.300 13.800 5.200z" fill="#111"/><path d="M2 5.600l.3 6.300 6.900-.7z" fill="#111" stroke="#111" stroke-width=".6" stroke-linejoin="round"/></g>
<g transform="translate(1170.600 82.300) scale(-1 1)"><rect x=".6" y=".6" width="14.200" height="14" rx="1.600" fill="url(#gnb)" stroke="#111" stroke-width="1.200"/><path d="M13.800 5.200C10.800 2 6 3 4.300 7.600l3 1.300C8.400 5.800 10.900 4.300 13.800 5.200z" fill="#111"/><path d="M2 5.600l.3 6.300 6.900-.7z" fill="#111" stroke="#111" stroke-width=".6" stroke-linejoin="round"/></g>
<g><rect x="1178.900" y="82.900" width="14.200" height="14" rx="1.600" fill="url(#gnb)" stroke="#111" stroke-width="1.200"/><path d="M1180.500 87.800v7l3.500-3.500z" fill="#fff" stroke="#111" stroke-width=".8"/><path d="M1191.300 87.200v8.200l-4-4.100z" fill="#111"/><path d="M1185.700 85.500v11" stroke="#111" stroke-width="1" stroke-dasharray="1.100 1.100"/><path d="M1182.300 86.500c1.800-2.600 5.400-2.600 7.200-.2" stroke="#222" stroke-width=".9" fill="none"/><path d="M1190.300 84.600l-.3 2.500-2.200-.9z" fill="#111"/></g>
<g><rect x="1201.400" y="82.300" width="15.400" height="15.200" rx="1" fill="#a2a2a2"/><path d="M1203.600 84.300h11v5.800h-11z" fill="#e9e9e9" opacity=".5"/><path d="M1204.600 89.600l1.700-4.500 1.700 4.500M1209.800 85.200h4.200M1211.900 85.200v4M1210 88l1.900 1.600 1.900-1.600" stroke="#fafafa" stroke-width="1" fill="none"/><path d="M1215.200 92.200l-3.800 3.600h3.800z" fill="#f4f4f4"/></g>
</svg>
<div class="a" style="left:1054px;top:100px;width:221px;height:191px;background:#808080"></div>
<div class="a" style="left:1097px;top:100px;width:135px;height:191px;background:#fff"></div>
<div class="a" style="left:1068px;top:100px;width:2px;height:191px;background:#ff0000"></div>
<div class="a" style="left:1261px;top:100px;width:2px;height:191px;background:#ff0000"></div>
<svg class="a" style="left:1097px;top:100px" width="135" height="191" viewBox="1097 100 135 191" fill="none" stroke="#000" stroke-width="3.500"><path d="M1106 100v12.700h-9"/><path d="M1223.500 100v12.700h9"/><path d="M1097 278.300h9v13"/><path d="M1232.500 278.300h-9v13"/><path d="M1164.800 101.500v11M1164.800 279v12" stroke-width="2.400"/><path d="M1097 195.600h9M1223.500 195.600h9" stroke-width="2"/></svg>
<div class="a" style="left:1163px;top:292px;width:1px;height:18px;background:#d5d5d5"></div>
<svg class="a" style="left:1265px;top:300px" width="9" height="9" viewBox="0 0 9 9" fill="#b4b4b4"><rect x="6" y="0" width="2" height="2"/><rect x="3" y="3" width="2" height="2"/><rect x="6" y="3" width="2" height="2"/><rect x="0" y="6" width="2" height="2"/><rect x="3" y="6" width="2" height="2"/><rect x="6" y="6" width="2" height="2"/></svg>
<!-- ===== Option panel ===== -->
<div class="panel" style="left:1055px;top:315px;width:185px;height:172px"></div>
<div class="a" style="left:1055px;top:315px;width:185px;height:30px;background:#fff"></div>
<div class="pt" style="letter-spacing:-0.385px;left:1063.500px;top:323px">Option</div>
<div class="a" style="left:1059px;top:349px;width:24px;height:22px;background:#f8f8f8;border:1px solid #cfcfcf"></div>
<svg class="a" style="left:1059px;top:350px;filter:drop-shadow(1px 1px 1px rgba(0,0,0,.25))" width="24" height="24" viewBox="0 0 24 24"><g transform="translate(0 -2.500)"><defs><linearGradient id="gpn2" x1="0" y1="0" x2="1" y2="1"><stop offset="0" stop-color="#1a1a1a"/><stop offset=".45" stop-color="#8f8f8f"/><stop offset=".62" stop-color="#555"/><stop offset="1" stop-color="#050505"/></linearGradient></defs><path d="M6.200 13.600L15.600 4c1.500-.7 3.500.9 3.100 2.600L9 15.900z" fill="url(#gpn2)" stroke="#0a0a0a" stroke-width=".7" stroke-linejoin="round"/><path d="M6.200 13.600l2.800 2.300-4.900 2.700z" fill="#f2f2f2" stroke="#111" stroke-width=".6" stroke-linejoin="round"/><path d="M4.100 18.600l1.200-2.300 1.100 1z" fill="#000"/></g></svg>
<div class="t" style="letter-spacing:-0.872px;left:1090.500px;top:353px">Brush</div>
<div class="combo" style="left:1063px;top:379px;width:133px;height:21px"></div>
<div class="t" style="letter-spacing:-0.672px;left:1066.500px;top:383px">Freehand</div>
<svg class="a" style="left:1182px;top:386px" width="10" height="7" viewBox="0 0 10 7" fill="none" stroke="#333" stroke-width="1.200"><path d="M1 1l4 4 4-4"/></svg>
<div class="t" style="letter-spacing:-0.594px;left:1062.500px;top:414.500px">Stabilization</div>
<div class="combo" style="left:1135px;top:411px;width:61px;height:21px"></div>
<div class="t" style="left:1138.500px;top:415px">0</div>
<svg class="a" style="left:1182px;top:418px" width="10" height="7" viewBox="0 0 10 7" fill="none" stroke="#333" stroke-width="1.200"><path d="M1 1l4 4 4-4"/></svg>
<div class="cb" style="left:1063px;top:440px"></div>
<svg class="a" style="left:1063px;top:440px" width="13" height="13" viewBox="0 0 13 13" fill="none" stroke="#222" stroke-width="1.300"><path d="M2.800 6.500l2.700 2.800 5-5.800"/></svg>
<div class="t" style="letter-spacing:-0.336px;left:1078.500px;top:440px">Curve Interp</div>
<div class="cb" style="left:1151px;top:441px;border-color:#c4c4c4;background:#f6f6f6"></div>
<svg class="a" style="left:1151px;top:441px" width="13" height="13" viewBox="0 0 13 13" fill="none" stroke="#bcbcbc" stroke-width="1.300"><path d="M2.800 6.500l2.700 2.800 5-5.800"/></svg>
<div class="t" style="letter-spacing:-0.809px;left:1166.500px;top:441px;color:#8c8c8c">Pen Pressure</div>
<div class="cb" style="left:1063px;top:463px"></div>
<svg class="a" style="left:1063px;top:463px" width="13" height="13" viewBox="0 0 13 13" fill="none" stroke="#222" stroke-width="1.300"><path d="M2.800 6.500l2.700 2.800 5-5.800"/></svg>
<div class="t" style="letter-spacing:-0.567px;left:1078.500px;top:463px">Anti-aliasing</div>
<div class="cb" style="left:1179px;top:463px"></div>
<div class="t" style="letter-spacing:-0.586px;left:1194.500px;top:463px">Dither</div>
<!-- ===== Brush panel ===== -->
<div class="panel" style="left:849px;top:648px;width:196px;height:314px"></div>
<div class="a" style="left:849px;top:648px;width:196px;height:49px;background:#fff"></div>
<div class="pt" style="letter-spacing:-0.894px;left:858px;top:656px">Brush</div>
<div class="pbtn" style="left:1025px;top:655px;width:19px;height:19px"><svg class="a" style="left:6.500px;top:7px" width="6" height="6" viewBox="0 0 6 6" fill="none" stroke="#ececec" stroke-width="1.100"><path d="M.5.5l5 5M5.500.5l-5 5"/></svg></div>
<div class="pt" style="letter-spacing:-0.894px;left:857px;top:681px;color:#777">Brush</div>
<div class="pt" style="letter-spacing:-0.738px;left:900.800px;top:681px;color:#777">View</div>
<div class="a chk chk8" style="left:851px;top:700px;width:191px;height:64px;border:1px solid #858585"></div>
<svg class="a" style="left:851px;top:700px" width="191" height="64" viewBox="851 700 191 64"><path d="M862 731.300C880 723 900 712 922 711.800c30-.3 48 22 76 22.500 13 .2 24-1 34-1.800C1020 738 1008 747 992 747c-30 0-48-26-72-26.500-20-.4-40 6.500-58 10.800z" fill="#000"/></svg>
<div class="a" style="left:849px;top:765px;width:196px;height:197px;background:#fff"></div>
<div class="a" style="left:849px;top:768px;width:179px;height:194px;background:#fff;border-left:1px solid #888;border-top:1px solid #6e6e6e;border-right:1px solid #858585"></div>
<div class="a" style="left:1029px;top:768px;width:15.500px;height:194px;background:#f0f0f0"></div>
<div class="a" style="left:1029px;top:785px;width:14.600px;height:81px;background:#cdcdcd"></div>
<svg class="a" style="left:1028px;top:768px" width="17" height="194" viewBox="0 0 17 194" fill="none" stroke="#484848" stroke-width="2"><path d="M4.900 11.300l3.400-3.400 3.400 3.400"/><path d="M4.900 183.700l3.400 3.400 3.400-3.400"/></svg>
<div class="a" style="left:850px;top:769px;width:177px;height:19px;background:#c4e1f8"></div>
<div class="a" style="left:850px;top:788px;width:177px;height:1px;background:#6e6e6e"></div>
<div class="a" style="left:852px;top:771px;width:14px;height:14px;background:#333333;border:1px solid rgba(0,0,0,.48)"></div>
<div class="t gt" style="letter-spacing:-0.680px;left:871.500px;top:772px;font-weight:bold">15</div>
<div class="t gt" style="letter-spacing:-0.339px;left:903.500px;top:772px;font-weight:bold">Pen</div>
<div class="a" style="left:850px;top:808px;width:177px;height:1px;background:#6e6e6e"></div>
<div class="a" style="left:852px;top:791px;width:14px;height:14px;background:#333333;border:1px solid rgba(0,0,0,.48)"></div>
<div class="t gt" style="letter-spacing:-1.330px;left:871.500px;top:792px">15</div>
<div class="t gt" style="letter-spacing:-0.307px;left:903.500px;top:792px">Pen (FadeIn/Out)</div>
<div class="a" style="left:850px;top:828px;width:177px;height:1px;background:#6e6e6e"></div>
<div class="a" style="left:852px;top:811px;width:14px;height:14px;background:#333333;border:1px solid rgba(0,0,0,.48)"></div>
<div class="t gt" style="letter-spacing:-1.330px;left:871.500px;top:812px">10</div>
<div class="t gt" style="letter-spacing:-0.465px;left:903.500px;top:812px">Pencil</div>
<div class="a" style="left:850px;top:848px;width:177px;height:1px;background:#6e6e6e"></div>
<div class="a" style="left:852px;top:831px;width:14px;height:14px;background:#cccccc;border:1px solid rgba(0,0,0,.48)"></div>
<div class="t gt" style="letter-spacing:-1.330px;left:871.500px;top:832px">50</div>
<div class="t gt" style="letter-spacing:-0.336px;left:903.500px;top:832px">Airbrush</div>
<div class="a" style="left:850px;top:868px;width:177px;height:1px;background:#6e6e6e"></div>
<div class="a" style="left:852px;top:851px;width:14px;height:14px;background:#80e0ff;border:1px solid rgba(0,0,0,.48)"></div>
<div class="t gt" style="letter-spacing:-1.330px;left:871.500px;top:852px">40</div>
<div class="t gt" style="letter-spacing:-0.458px;left:903.500px;top:852px">Watercolor</div>
<div class="a" style="left:850px;top:888px;width:177px;height:1px;background:#6e6e6e"></div>
<div class="a" style="left:852px;top:871px;width:14px;height:14px;background:#1cb400;border:1px solid rgba(0,0,0,.48)"></div>
<div class="t gt" style="letter-spacing:-1.330px;left:871.500px;top:872px">20</div>
<div class="t gt" style="letter-spacing:-0.970px;left:903.500px;top:872px">EdgePen</div>
<div class="a" style="left:850px;top:908px;width:177px;height:1px;background:#6e6e6e"></div>
<div class="a" style="left:852px;top:891px;width:14px;height:14px;background:#ffb0ff;border:1px solid rgba(0,0,0,.48)"></div>
<div class="t gt" style="letter-spacing:-1.330px;left:871.500px;top:892px">40</div>
<div class="t gt" style="letter-spacing:-0.511px;left:903.500px;top:892px">Blur</div>
<div class="a" style="left:850px;top:928px;width:177px;height:1px;background:#6e6e6e"></div>
<div class="a" style="left:852px;top:911px;width:14px;height:14px;background:#ffe0cc;border:1px solid rgba(0,0,0,.48)"></div>
<div class="t gt" style="letter-spacing:-1.330px;left:871.500px;top:912px">50</div>
<div class="t gt" style="letter-spacing:-0.867px;left:903.500px;top:912px">Smudge</div>
<div class="a" style="left:850px;top:948px;width:177px;height:1px;background:#6e6e6e"></div>
<div class="a" style="left:852px;top:931px;width:14px;height:14px;background:#ffffff;border:1px solid rgba(0,0,0,.48)"></div>
<div class="t gt" style="letter-spacing:-1.396px;left:871.500px;top:932px">8.5</div>
<div class="t gt" style="letter-spacing:-0.674px;left:903.500px;top:932px">Eraser</div>
<div class="a" style="left:852px;top:951px;width:14px;height:11px;background:#f03030;border:1px solid rgba(0,0,0,.48);border-bottom:0"></div>
<div class="t gt" style="letter-spacing:-1.330px;left:871.500px;top:952px;height:10px;overflow:hidden">50</div>
<div class="t gt" style="letter-spacing:-0.466px;left:903.500px;top:952px;height:10px;overflow:hidden">Bichu</div>
<svg class="a" style="left:1011px;top:772px" width="14" height="14" viewBox="-7.600 -7.600 15.200 15.200"><g fill="#9a9a9a"><circle r="4.200"/><rect x="-1.300" y="-6.500" width="2.600" height="4" transform="rotate(0)"/><rect x="-1.300" y="-6.500" width="2.600" height="4" transform="rotate(45)"/><rect x="-1.300" y="-6.500" width="2.600" height="4" transform="rotate(90)"/><rect x="-1.300" y="-6.500" width="2.600" height="4" transform="rotate(135)"/><rect x="-1.300" y="-6.500" width="2.600" height="4" transform="rotate(180)"/><rect x="-1.300" y="-6.500" width="2.600" height="4" transform="rotate(225)"/><rect x="-1.300" y="-6.500" width="2.600" height="4" transform="rotate(270)"/><rect x="-1.300" y="-6.500" width="2.600" height="4" transform="rotate(315)"/></g><circle r="1.600" fill="#c4e1f8"/></svg>
<!-- ===== Layer panel ===== -->
<div class="panel" style="left:1050px;top:647px;width:222px;height:312px"></div>
<div class="a" style="left:1050px;top:647px;width:222px;height:50px;background:#fff"></div>
<div class="pt" style="letter-spacing:-1.006px;left:1058.500px;top:655px">Layer</div>
<div class="pbtn" style="left:1252px;top:654px;width:19px;height:19px"><svg class="a" style="left:6.500px;top:7px" width="6" height="6" viewBox="0 0 6 6" fill="none" stroke="#ececec" stroke-width="1.100"><path d="M.5.5l5 5M5.500.5l-5 5"/></svg></div>
<div class="pt" style="letter-spacing:-1.106px;left:1057px;top:680px;color:#777">Layer</div>
<div class="pt" style="letter-spacing:-0.727px;left:1099.500px;top:680px;color:#777">Edit</div>
<div class="pt" style="letter-spacing:-0.647px;left:1133px;top:680px;color:#777">Convert</div>
<div class="t gt" style="letter-spacing:-0.428px;left:1057.500px;top:704px;font-size:11px">Blend</div>
<div class="combo" style="left:1118px;top:703px;width:100px;height:20px"></div>
<div class="t gt" style="letter-spacing:-0.612px;left:1122.500px;top:706px">Normal</div>
<svg class="a" style="left:1204px;top:710px" width="10" height="7" viewBox="0 0 10 7" fill="none" stroke="#333" stroke-width="1.200"><path d="M1 1l4 4 4-4"/></svg>
<div class="t gt" style="letter-spacing:-0.328px;left:1057.500px;top:726px;font-size:11px">Opacity</div>
<div class="a" style="left:1118px;top:725px;width:100px;height:17px;background:linear-gradient(to right,#d0e4f7,#7fc1f6);border:1px solid #666"></div>
<div class="t gt" style="letter-spacing:-0.715px;left:1224px;top:726px;font-size:10.500px">100%</div>
<div class="cb" style="left:1058px;top:750px"></div>
<div class="t gt" style="letter-spacing:-0.333px;left:1073.500px;top:748px;font-size:11px">Lock Alpha</div>
<div class="cb" style="left:1135px;top:750px"></div>
<div class="t gt" style="letter-spacing:-0.781px;left:1150.500px;top:748px;font-size:11px">Clipping</div>
<div class="cb" style="left:1210px;top:750px"></div>
<div class="t gt" style="letter-spacing:-0.062px;left:1226px;top:748px;font-size:11px">Lock</div>
<!-- list -->
<div class="a" style="left:1050px;top:769px;width:205px;height:149px;background:#808080"></div>
<div class="a" style="left:1050px;top:770px;width:205px;height:80px;background:#fff;border:1px solid #000"></div>
<div class="a" style="left:1087px;top:771px;width:167px;height:39px;background:#c4e1f8"></div>
<div class="a" style="left:1051px;top:809.500px;width:203px;height:1px;background:#000"></div>
<div class="a" style="left:1068.500px;top:771px;width:1px;height:78px;background:#000"></div>
<div class="a" style="left:1086px;top:771px;width:1px;height:78px;background:#000"></div>
<div class="a" style="left:1055px;top:785px;width:10px;height:10px;border-radius:50%;background:#c6c6c6"></div>
<div class="a" style="left:1055px;top:825px;width:10px;height:10px;border-radius:50%;background:#c6c6c6"></div>
<div class="t" style="left:1073px;top:782.500px;font-size:15px;font-weight:bold;color:#848484">+</div>
<div class="a chk chk8" style="left:1096px;top:772px;width:25px;height:36px;border:1px solid #9a9a9a"></div>
<div class="a chk chk8" style="left:1096px;top:812px;width:25px;height:36px;border:1px solid #777"></div>
<svg class="a" style="left:1096px;top:812px" width="25" height="36" viewBox="0 0 25 36" fill="none" stroke="#111" stroke-width="1.200"><path d="M.5 3V.5H3M22 .5h2.500V3M.5 33v2.500H3M22 35.500h2.500V33M12.500 0v2M12.500 34v2"/></svg>
<div class="t gt" style="letter-spacing:0.180px;left:1135.500px;top:775.500px;font-weight:bold;font-size:13px">Layer1</div>
<div class="a" style="left:1136px;top:794px;width:11px;height:11px;border:1px solid #000;background:linear-gradient(to right,#f0f 0,#f0f 20%,#00f 20%,#00f 36%,#0cf 36%,#0cf 52%,#0c0 52%,#0c0 68%,#fe0 68%,#fe0 84%,#f00 84%)"></div>
<div class="t gt" style="letter-spacing:-0.457px;left:1153.500px;top:792.500px;font-size:11px">Normal 0 kB</div>
<svg class="a" style="left:1232px;top:781px" width="20" height="20" viewBox="-10 -10 20 20"><g fill="#8c8c8c"><circle r="6"/><rect x="-1.800" y="-9.300" width="3.600" height="5" transform="rotate(0)"/><rect x="-1.800" y="-9.300" width="3.600" height="5" transform="rotate(45)"/><rect x="-1.800" y="-9.300" width="3.600" height="5" transform="rotate(90)"/><rect x="-1.800" y="-9.300" width="3.600" height="5" transform="rotate(135)"/><rect x="-1.800" y="-9.300" width="3.600" height="5" transform="rotate(180)"/><rect x="-1.800" y="-9.300" width="3.600" height="5" transform="rotate(225)"/><rect x="-1.800" y="-9.300" width="3.600" height="5" transform="rotate(270)"/><rect x="-1.800" y="-9.300" width="3.600" height="5" transform="rotate(315)"/></g><circle r="2.300" fill="#c4e1f8"/></svg>
<div class="t gt" style="letter-spacing:-0.439px;left:1135.500px;top:815.500px;font-size:13px">Background</div>
<div class="a" style="left:1136px;top:834px;width:11px;height:11px;border:1px solid #000;background:#fff"></div>
<div class="a" style="left:1138px;top:836px;width:4px;height:3px;background:#d050c0"></div>
<div class="a" style="left:1140px;top:838px;width:5px;height:5px;border-radius:50%;background:#f5b400"></div>
<div class="t gt" style="letter-spacing:-0.576px;left:1153.500px;top:832px;font-size:11px">Normal</div>
<!-- scrollbar -->
<div class="a" style="left:1255px;top:769px;width:17px;height:149px;background:#f0f0f0"></div>
<svg class="a" style="left:1255px;top:769px" width="17" height="149" viewBox="0 0 17 149" fill="none" stroke="#b2b2b2" stroke-width="1.700"><path d="M4.800 12l3.700-3.700 3.700 3.700"/><path d="M4.800 139l3.700 3.700 3.700-3.700"/></svg>
<!-- toolbar -->
<svg class="a" style="left:1050px;top:918px" width="222" height="22" viewBox="1050 918 222 22" fill="#fff" stroke="#747474" stroke-width="1">
<g><path d="M1054.600 921.500h6.600l4.300 4.300v10.700h-10.900z" stroke-linejoin="round"/><path d="M1061.200 921.500v4.300h4.300" fill="none"/><rect x="1056.700" y="928.800" width="6.600" height="4.600" rx=".8" stroke="#666" stroke-width=".7"/><rect x="1057.200" y="929.300" width="3" height="3.600" fill="#000" stroke="none"/></g>
<g transform="translate(20 0)"><path d="M1054.600 921.500h6.600l4.300 4.300v10.700h-10.900z" stroke-linejoin="round"/><path d="M1061.200 921.500v4.300h4.300" fill="none"/><rect x="1056.700" y="928.800" width="6.600" height="4.600" rx=".8" fill="#999" stroke="#666" stroke-width=".7"/><rect x="1057.200" y="929.300" width="2" height="3.600" fill="#000" stroke="none"/><rect x="1061" y="929.300" width="1.800" height="3.600" fill="#e4e4e4" stroke="none"/></g>
<g transform="translate(40 0)"><path d="M1054.600 921.500h6.600l4.300 4.300v10.700h-10.900z" stroke-linejoin="round"/><path d="M1061.200 921.500v4.300h4.300" fill="none"/><rect x="1056.700" y="928.800" width="6.600" height="4.600" rx=".8" stroke="#666" stroke-width=".7"/><rect x="1057.200" y="929.300" width="2" height="3.600" fill="#f00" stroke="none"/><rect x="1059.200" y="929.300" width="1.800" height="3.600" fill="#0c0" stroke="none"/><rect x="1061" y="929.300" width="1.800" height="3.600" fill="#03f" stroke="none"/></g>
<g transform="translate(60 0)"><path d="M1054.600 921.500h6.600l4.300 4.300v10.700h-10.900z" stroke-linejoin="round"/><path d="M1061.200 921.500v4.300h4.300" fill="none"/><rect x="1056.700" y="928.800" width="6.600" height="4.600" rx=".8" stroke="#777" stroke-width=".7"/><rect x="1057.800" y="929.800" width="2.400" height="1.800" fill="#d050c0" stroke="none"/><circle cx="1061" cy="931.800" r="1.200" fill="#f5b400" stroke="none"/></g>
<g transform="translate(84 0)" stroke="#858585"><path d="M1054.600 921.500h6.600l4.300 4.300v10.700h-10.900z" stroke-linejoin="round"/><path d="M1061.200 921.500v4.300h4.300" fill="none"/><rect x="1056.700" y="928.800" width="6.600" height="4.600" rx="1" stroke="#858585" stroke-width=".8"/></g>
<g transform="translate(110.200 0)"><path d="M1054.600 921.500h6.600l4.300 4.300v10.700h-10.900z" stroke-linejoin="round"/><path d="M1061.200 921.500v4.300h4.300" fill="none"/><path d="M1056.500 928.600h2.600l.9 1h3.600v4.100h-7.100z" fill="#cfc02a" stroke="#8a7c10" stroke-width=".7"/></g>
<g stroke="#8e8e8e" fill="none" stroke-width="1"><path d="M1256.500 924.300c0-1.300 10-1.300 10 0M1260.300 923v-.8h2.600v.8" /><path d="M1257.300 925l.8 10.300c.5.900 6.400.9 6.900 0l.8-10.300" fill="#e2e2e2"/><path d="M1259.700 926.500l.3 7.500M1261.600 926.500v7.500M1263.500 926.500l-.3 7.500"/></g>
</svg>
<div class="a" style="left:1050px;top:939px;width:222px;height:1px;background:#b4b4b4"></div>
<div class="t" style="letter-spacing:-0.139px;left:1052.500px;top:944px">Undo 0 MB / Total 12 MB</div>
<svg class="a" style="left:1262px;top:949px" width="9" height="9" viewBox="0 0 9 9" fill="#b4b4b4"><rect x="6" y="0" width="2" height="2"/><rect x="3" y="3" width="2" height="2"/><rect x="6" y="3" width="2" height="2"/><rect x="0" y="6" width="2" height="2"/><rect x="3" y="6" width="2" height="2"/><rect x="6" y="6" width="2" height="2"/></svg>
<!-- ===== Snap panel ===== -->
<div class="panel" style="left:656px;top:893px;width:184px;height:59px"></div>
<div class="a" style="left:656px;top:893px;width:184px;height:30px;background:#fff"></div>
<div class="pt" style="letter-spacing:-0.535px;left:665px;top:901px">Snap: off</div>
<div class="a" style="left:660px;top:929px;width:18px;height:18px;background:#fff;border:1px solid #a5a5a5"></div>
<div class="t" style="left:661.500px;top:937.500px;font-family:'Liberation Mono',monospace;font-size:8.500px;line-height:10px;letter-spacing:-.300px;color:#222">off</div>
<svg class="a" style="left:682px;top:929px" width="126" height="18" viewBox="0 0 126 18" fill="none" stroke="#666" stroke-width=".85">
<rect x="0" y="0" width="126" height="18" fill="#b1b1b1" stroke="none"/>
<g><rect x=".5" y=".5" width="17" height="17"/><path d="M1 7l16-6M1 11l16-6M1 15l16-6M5 17l12-4.500"/></g>
<g transform="translate(18 0)"><rect x=".5" y=".5" width="17" height="17"/><path d="M4.500 1v16M9 1v16M13.500 1v16M1 4.500h16M1 9h16M1 13.500h16"/></g>
<g transform="translate(36 0)"><rect x=".5" y=".5" width="17" height="17"/><path d="M1 3.500h8l8-1M1 7.500h8l8-1.500M1 11.500h8l8 1M1 15h8l8 1"/></g>
<g transform="translate(54 0)"><rect x=".5" y=".5" width="17" height="17"/><path d="M1 17L4 1M1 17L9 1M1 17L17 2M1 17l16-8M1 17l16-3"/></g>
<g transform="translate(72 0)"><rect x=".5" y=".5" width="17" height="17"/><path d="M5.500 1h7L17 5.500v7L12.500 17h-7L1 12.500v-7z"/><circle cx="9" cy="9" r="5"/><circle cx="9" cy="9" r="2.300"/></g>
<g transform="translate(90 0)"><rect x=".5" y=".5" width="17" height="17"/><path d="M1 5h4c5 0 7 3 8.500 7L15 17"/><rect x="4" y="3.500" width="3" height="3" fill="#333" stroke="none"/><rect x="12" y="10.500" width="3" height="3" fill="#333" stroke="none"/></g>
<g transform="translate(108 0)"><rect x=".5" y=".5" width="17" height="17"/><path d="M1 5.500h16M1 9.500h16M1 13.500h16M5 5.500L3 17M9 5.500V17M13 5.500L15 17"/></g>
</svg>
<div class="a" style="left:815px;top:928px;width:21px;height:20px;background:#c9c9c9"></div>
<div class="a" style="left:820px;top:932.500px;width:12px;height:12px;border-radius:50%;background:#9b9b9b;box-shadow:1px 1px 0 #f4f4f4"></div>
<!-- ===== Help dropdown menu ===== -->
<div class="a" style="left:204px;top:43px;width:201px;height:165px;background:#f2f2f2;border:1px solid #cccccc;box-shadow:4px 4px 4px -1px rgba(0,0,0,.45)"></div>
<div class="t" style="letter-spacing:-0.403px;left:239px;top:49px">Version...</div>
<div class="a" style="left:235px;top:70px;width:167px;height:1px;background:#d0d0d0"></div>
<div class="t" style="letter-spacing:-0.174px;left:239px;top:78px;color:#7a7a7a">Language</div>
<svg class="a" style="left:388px;top:80px" width="6" height="10" viewBox="0 0 6 10" fill="none" stroke="#9a9a9a" stroke-width="1.200"><path d="M1 1l4 4-4 4"/></svg>
<div class="a" style="left:235px;top:99px;width:167px;height:1px;background:#d0d0d0"></div>
<div class="t" style="letter-spacing:-0.189px;left:239px;top:107px">Developer</div>
<svg class="a" style="left:388px;top:109px" width="6" height="10" viewBox="0 0 6 10" fill="none" stroke="#333" stroke-width="1.200"><path d="M1 1l4 4-4 4"/></svg>
<div class="t" style="letter-spacing:-0.071px;left:239px;top:129px">Show Debug Info</div>
<div class="a" style="left:235px;top:150px;width:167px;height:1px;background:#d0d0d0"></div>
<div class="a" style="left:207px;top:154px;width:22px;height:22px;background:#91c9f7"></div>
<svg class="a" style="left:207px;top:154px" width="22" height="22" viewBox="0 0 22 22" fill="none" stroke="#3a3a3a" stroke-width="1.500"><path d="M6.500 11l3.200 3.200 6-6.200"/></svg>
<div class="t" style="letter-spacing:0.067px;left:239px;top:158px">Multi Threading</div>
<div class="a" style="left:235px;top:179px;width:167px;height:1px;background:#d0d0d0"></div>
<div class="t" style="letter-spacing:-0.170px;left:239px;top:187px">Open Config Folder...</div>
<!-- annotation rectangle -->
<div class="a" style="left:190px;top:144px;width:223px;height:42px;border:3px solid #f83e3e;border-radius:4px"></div>
</body>
</html>
